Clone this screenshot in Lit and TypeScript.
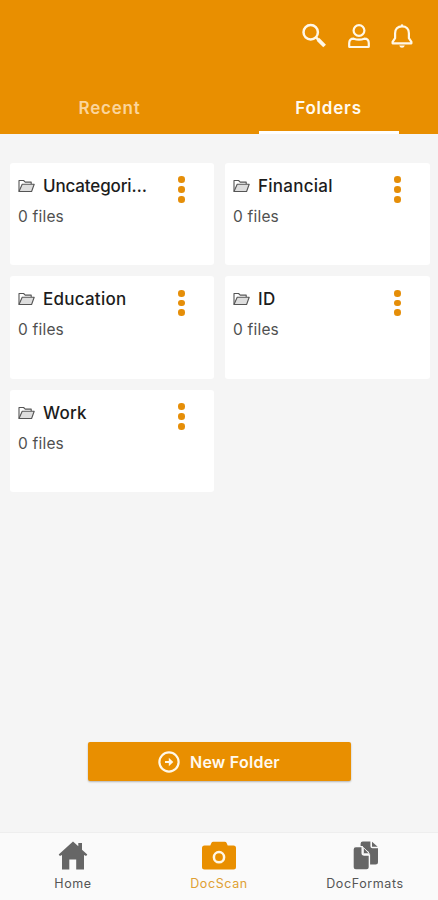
import { LitElement, html, css, svg } from "lit";
import { customElement, property } from "lit/decorators.js";
import { classMap } from "lit/directives/class-map.js";

@customElement("folder-card")
class FolderCard extends LitElement {
  @property() name = "";
  @property({ type: Number }) files = 0;

  static styles = css`
    :host { display: block; background: #fff; border-radius: 3px; padding: 11px 29px 0 8px; box-sizing: border-box; min-width: 0; }
    .head { display: flex; align-items: center; height: 24px; }
    .folder { width: 17px; height: 14px; flex: none; margin-right: 8px; }
    .name { width: 112px; font-size: 17px; font-weight: 500; line-height: 24px; letter-spacing: 0.25px; color: #1c1c1c; white-space: nowrap; }
    .name.long { letter-spacing: -0.15px; }
    .menu { margin-left: auto; display: flex; flex-direction: column; gap: 3.2px; margin-top: 8px; }
    .dot { width: 6.6px; height: 6.6px; border-radius: 50%; background: #e58e08; }
    .count { font-size: 15.5px; line-height: 22px; margin-top: 8px; color: #505050; font-weight: 400; letter-spacing: 0.2px; }
  `;

  render() {
    const long = this.name.length > 10;
    const label = long ? this.name.slice(0, 10) + "…" : this.name;
    return html`
      <div class="head">
        <svg class="folder" viewBox="0 0 17 14" fill="none" stroke="#555" stroke-width="1.1" stroke-linejoin="round">
          <path d="M1 12.5V1.5H5.6L7.2 3.1H13.2V5.2" />
          <path d="M1 12.5L4.2 5.2H16.2L13.6 12.5Z" fill="#dedede" />
        </svg>
        <div class=${classMap({ name: true, long })}>${label}</div>
        <div class="menu"><div class="dot"></div><div class="dot"></div><div class="dot"></div></div>
      </div>
      <div class="count">${this.files} files</div>
    `;
  }
}

const homeIcon = svg`
  <path fill="#666" d="M15 .5L20.3 5.3V2H24V8.8L29.3 13.6L28.1 15.1L26 14V28.4H18.2V18.5H11.3V28.4H4V14L1.9 15.1L.7 13.6Z"/>`;
const cameraIcon = svg`
  <path fill="#e98f00" d="M2.5 4.5H8.3L9.5 1.8Q10 .8 11.2 .8H22.8Q24 .8 24.5 1.8L25.7 4.5H31.5Q34 4.5 34 7V26Q34 28.5 31.5 28.5H2.5Q0 28.5 0 26V7Q0 4.5 2.5 4.5Z"/>
  <circle cx="17" cy="16.2" r="5.1" fill="none" stroke="#fff7e5" stroke-width="2.5"/>`;
const docsIcon = svg`
  <path fill="#666" d="M9.8 .5H17.4V5.2Q17.4 7.2 19.4 7.2H25V21Q25 23.5 22.5 23.5H16V11L7.6 5V2.7Q7.6 .5 9.8 .5Z"/>
  <path fill="#666" d="M19 .8L24.7 5.8H19Z"/>
  <path fill="#666" stroke="#fafafa" stroke-width="1.4" d="M2.8 5.6H9.2V12Q9.2 14 11.2 14H16.4V26.2Q16.4 29 13.6 29H2.8Q0 29 0 26.2V8.4Q0 5.6 2.8 5.6Z"/>
  <path fill="#666" stroke="#fafafa" stroke-width=".8" d="M10.4 6.4L16.4 12.7H10.4Z"/>`;

@customElement("app-root")
class AppRoot extends LitElement {
  static styles = css`
    :host { display: flex; flex-direction: column; width: 438px; height: 900px; background: #f5f5f5; font-family: Inter, "Noto Sans", sans-serif; overflow: hidden; }
    header { height: 134px; background: #e98f00; display: flex; flex-direction: column; flex: none; }
    .actions { height: 72px; display: flex; justify-content: flex-end; align-items: center; gap: 20px; padding-right: 25px; box-sizing: border-box; }
    .actions svg { display: block; }
    .tabs { display: grid; grid-template-columns: 1fr 1fr; flex: 1; }
    .tab { display: flex; flex-direction: column; align-items: center; justify-content: space-between; padding-top: 24px; font-size: 17px; line-height: 24px; font-weight: 600; letter-spacing: 0.8px; color: #fbd59b; }
    .tab.active { color: #fffaf0; }
    .line { width: 140px; height: 3.5px; }
    .active .line { background: #fff; }
    .grid { display: grid; grid-template-columns: 204px 205px; grid-auto-rows: 102.5px; gap: 11px; padding: 28.5px 8px 0 10px; }
    .body { flex: 1; display: flex; flex-direction: column; justify-content: space-between; }
    .new { width: 263px; height: 39px; margin: 0 0 51px 88px; background: #e98f00; border: 0; border-radius: 2px; box-shadow: 0 1px 2px #0004; display: flex; align-items: center; gap: 10px; padding: 0 0 0 70px; box-sizing: border-box; color: #fffaf0; font: 600 16px/24px Inter, sans-serif; letter-spacing: 0.25px; white-space: nowrap; }
    nav { height: 68px; flex: none; box-sizing: border-box; border-top: 1px solid #eee; background: #fafafa; display: grid; grid-template-columns: repeat(3, 1fr); }
    .item { display: flex; flex-direction: column; align-items: center; padding-top: 8px; font-size: 12.5px; line-height: 18px; letter-spacing: 0.6px; color: #555; }
    .item svg { height: 30px; display: block; margin-bottom: 4px; }
    .item.active { color: #dfa033; }
  `;

  private folders = ["Uncategorized", "Financial", "Education", "ID", "Work"];
  private items = [
    { label: "Home", icon: homeIcon, width: 30 },
    { label: "DocScan", icon: cameraIcon, width: 34 },
    { label: "DocFormats", icon: docsIcon, width: 25 },
  ];

  render() {
    return html`
      <header>
        <div class="actions">
          <svg width="26" height="26" viewBox="0 0 26 26" fill="none" stroke="#fff8e8">
            <circle cx="9.7" cy="9.2" r="7.2" stroke-width="2.5" /><path d="M15 14.3L17.3 16.6" stroke-width="2.6" /><path d="M17 16.4L23.6 23" stroke-width="3.8" />
          </svg>
          <svg width="24" height="26" viewBox="0 0 24 26" fill="none" stroke="#fff8e8" stroke-width="2.2">
            <circle cx="12" cy="7.5" r="5.4" /><path d="M2.2 23.5V20.2Q2.2 15.7 6.7 15.7Q12 17.6 17.3 15.7Q21.8 15.7 21.8 20.2V23.5Q21.8 24 21.2 24H2.8Q2.2 24 2.2 23.5Z" />
          </svg>
          <svg width="22" height="26" viewBox="0 0 22 26" fill="none" stroke="#fff8e8" stroke-width="2.2" stroke-linejoin="round">
            <path d="M11 3.3C6.5 3.3 4.1 6.4 4.1 10.2V15.2L1.6 18.8V20.3H20.4V18.8L17.9 15.2V10.2C17.9 6.4 15.5 3.3 11 3.3Z" /><path d="M11 1.4V3" /><path d="M8.2 22.5H13.8Q13.2 24.8 11 24.8T8.2 22.5Z" fill="#fff8e8" stroke="none" />
          </svg>
        </div>
        <div class="tabs">
          <div class="tab">Recent<div class="line"></div></div>
          <div class="tab active">Folders<div class="line"></div></div>
        </div>
      </header>
      <div class="body">
        <div class="grid">${this.folders.map((f) => html`<folder-card .name=${f}></folder-card>`)}</div>
        <button class="new">
          <svg width="22" height="22" viewBox="0 0 22 22" fill="none" stroke="#fff8e8" stroke-width="2.2">
            <circle cx="11" cy="11" r="9.6" /><path d="M7 11H13" stroke-width="2" /><path d="M10.8 6.8L15.3 11L10.8 15.2Z" fill="#fff8e8" stroke="none" />
          </svg>
          New Folder
        </button>
      </div>
      <nav>
        ${this.items.map((i) => html`
          <div class=${classMap({ item: true, active: i.label === "DocScan" })}>
            <svg width=${i.width} viewBox="0 0 ${i.width} 30">${i.icon}</svg>${i.label}
          </div>`)}
      </nav>
    `;
  }
}
